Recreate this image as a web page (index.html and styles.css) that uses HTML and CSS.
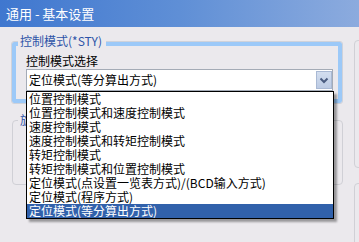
FILE: index.html
```html
<!DOCTYPE html>
<html lang="zh-CN">
<head>
  <meta charset="UTF-8">
  <title>通用 - 基本设置</title>
  <link rel="stylesheet" href="styles.css">
</head>
<body>
  <div class="window">
    <div class="titlebar">通用 - 基本设置</div>
    <div class="content">
      <div class="col-main">
        <div class="group group-active">
          <span class="group-title">控制模式(*STY)</span>
          <div class="field-label">控制模式选择</div>
          <div class="combo">
            <div class="combo-value">定位模式(等分算出方式)</div>
            <span class="combo-btn">
              <svg width="14" height="16" viewBox="0 0 14 16">
                <path d="M3.5 6.5 L7 10 L10.5 6.5" fill="none" stroke="#4a5c80" stroke-width="2"/>
              </svg>
            </span>
            <ul class="combo-list">
              <li>位置控制模式</li>
              <li>位置控制模式和速度控制模式</li>
              <li>速度控制模式</li>
              <li>速度控制模式和转矩控制模式</li>
              <li>转矩控制模式</li>
              <li>转矩控制模式和位置控制模式</li>
              <li>定位模式(点设置一览表方式)/(BCD输入方式)</li>
              <li>定位模式(程序方式)</li>
              <li class="selected">定位模式(等分算出方式)</li>
            </ul>
          </div>
        </div>
        <div class="group group-plain">
          <span class="group-title">旋转方向</span>
        </div>
      </div>
      <div class="col-side">
        <div class="group side-top"></div>
        <div class="group side-bottom"></div>
      </div>
    </div>
  </div>
</body>
</html>
```

FILE: styles.css
```css
body {
  margin: 0;
  font-family: "Noto Sans CJK SC", "DejaVu Sans", sans-serif;
  font-size: 12px;
  color: #000;
  background: #ebe9ed;
  overflow: hidden;
}

.window {
  width: 359px;
  height: 242px;
  overflow: hidden;
}

.titlebar {
  height: 27px;
  padding-left: 6px;
  line-height: 28px;
  font-size: 13px;
  color: #fff;
  background: linear-gradient(to right, #3f77cf, #5f8fd6 50%, #8cabde);
  box-sizing: border-box;
}

.content {
  display: flex;
  gap: 11px;
  padding-left: 12px;
  padding-top: 13px;
}

.col-main {
  width: 331px;
  flex-shrink: 0;
  padding-top: 2px;
}

.col-side {
  width: 80px;
  flex-shrink: 0;
}

.group {
  position: relative;
  box-sizing: border-box;
}

.group-title {
  position: absolute;
  left: 2px;
  padding: 0 4px 0 2px;
  line-height: 14px;
  background: #ebe9ed;
  color: #2e54a8;
}

.group-active {
  width: 330px;
  height: 61px;
  border: 4px solid #9cc9f8;
  outline: 1px solid #cfd2da;
  border-radius: 2px;
  padding: 8px 0 0 10px;
}

.group-active .group-title {
  top: -12px;
}

.field-label {
  line-height: 14px;
}

.combo {
  position: relative;
  width: 307px;
  height: 22px;
  margin-top: 1px;
  border: 1px solid #a4abb6;
  background: #fff;
  box-sizing: border-box;
}

.combo-value {
  padding-left: 2px;
  line-height: 20px;
}

.combo-btn {
  position: absolute;
  top: 1px;
  right: 0;
  width: 16px;
  height: 18px;
  border: 1px solid #a9b9d4;
  background: linear-gradient(#d3deef, #bccbe4);
  box-sizing: border-box;
  display: flex;
  align-items: center;
  justify-content: center;
}

.combo-list {
  position: absolute;
  top: 21px;
  left: -1px;
  width: 308px;
  margin: 0;
  padding: 0;
  list-style: none;
  background: #fff;
  border: 1px solid #000;
  box-sizing: border-box;
  box-shadow: 3px 3px 2px rgba(0, 0, 0, 0.35);
  z-index: 5;
}

.combo-list li {
  height: 14px;
  line-height: 14px;
  padding-left: 2px;
  white-space: nowrap;
  overflow: hidden;
}

.combo-list li.selected {
  background: #3161ab;
  color: #fff;
}

.group-plain {
  width: 331px;
  height: 65px;
  margin-top: 17px;
  border: 1px solid #d0d0d6;
  border-radius: 4px;
}

.group-plain .group-title {
  top: -8px;
  left: 5px;
}

.side-top {
  height: 128px;
  border: 1px solid #d0d0d6;
  border-radius: 4px;
}

.side-bottom {
  height: 100px;
  margin-top: 15px;
  border: 1px solid #d0d0d6;
  border-radius: 4px;
}
```
